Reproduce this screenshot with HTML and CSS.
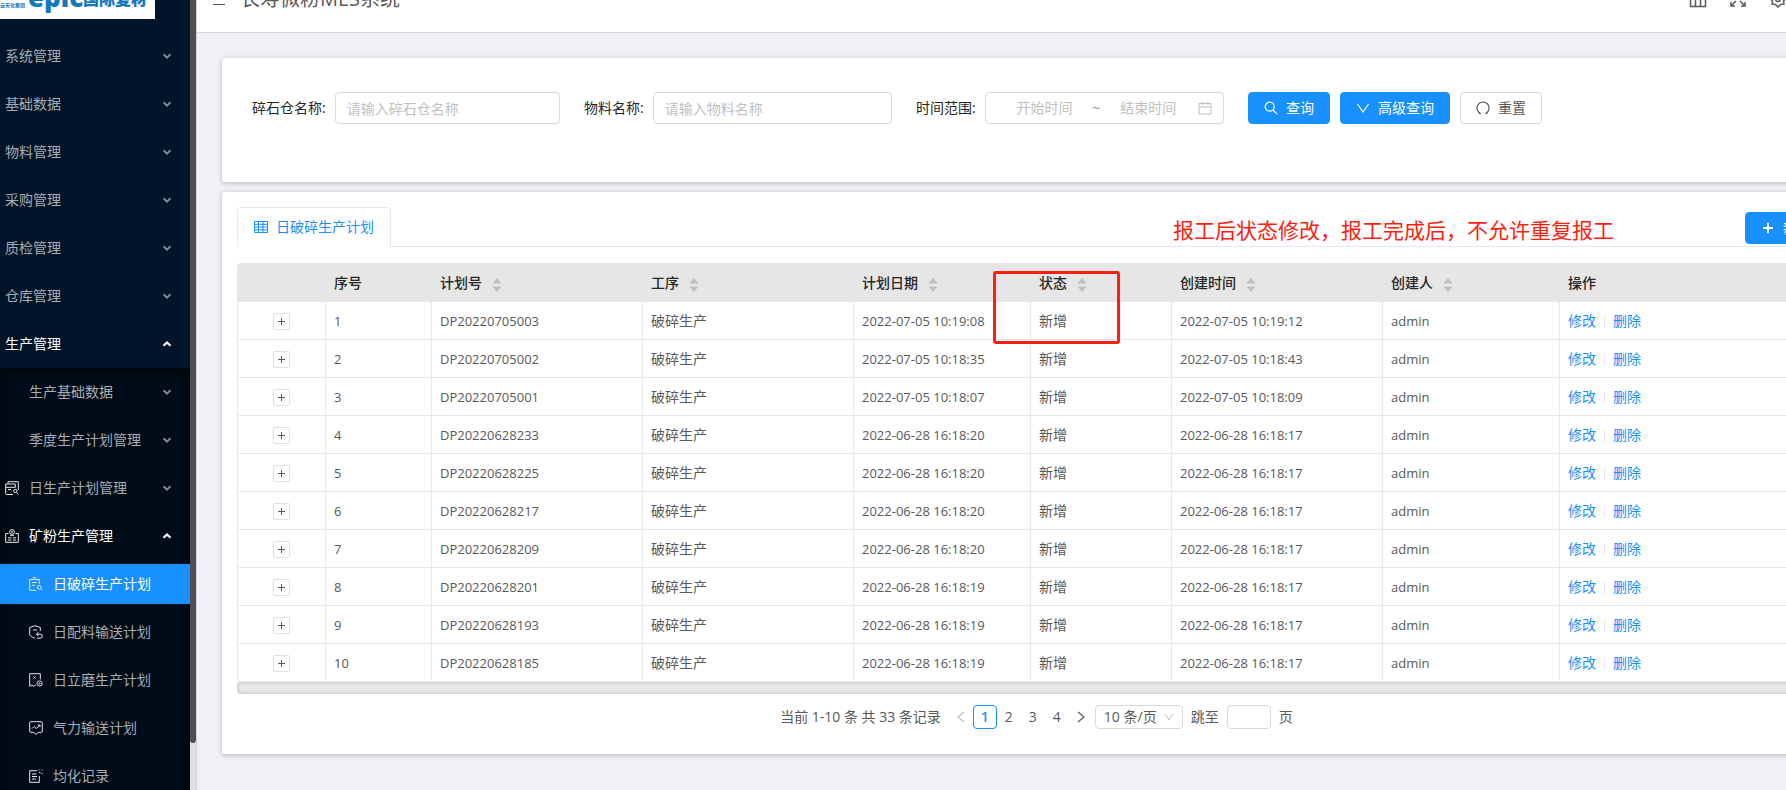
FILE: index.html
```html
<!DOCTYPE html>
<html lang="zh-CN">
<head>
<meta charset="utf-8">
<title>长寿微粉MES系统</title>
<link rel="stylesheet" href="styles.css">
</head>
<body>
<svg class="defs" aria-hidden="true">
  <symbol id="down" viewBox="0 0 10 10"><path d="M1.5 3.2 5 6.6 8.500 3.2" fill="none" stroke="currentColor" stroke-width="2"/></symbol>
  <symbol id="up" viewBox="0 0 10 10"><path d="M1.5 6.8 5 3.5 8.5 6.8" fill="none" stroke="currentColor" stroke-width="2.2"/></symbol>
  <symbol id="sort" viewBox="0 0 10 16"><path d="M5 1 9.5 6.5H.5zM5 15 9.5 9.5H.5z" fill="currentColor"/></symbol>
</svg>
<div class="app">
  <aside class="sider">
    <div class="logo"><span class="logo-group">云天化集团</span><span class="logo-en">epic</span><span class="logo-cn">国际复材</span></div>
    <nav class="menu">
      <a class="item" href="#">系统管理<svg class="arrow"><use href="#down"/></svg></a>
      <a class="item" href="#">基础数据<svg class="arrow"><use href="#down"/></svg></a>
      <a class="item" href="#">物料管理<svg class="arrow"><use href="#down"/></svg></a>
      <a class="item" href="#">采购管理<svg class="arrow"><use href="#down"/></svg></a>
      <a class="item" href="#">质检管理<svg class="arrow"><use href="#down"/></svg></a>
      <a class="item" href="#">仓库管理<svg class="arrow"><use href="#down"/></svg></a>
      <a class="item open" href="#">生产管理<svg class="arrow"><use href="#up"/></svg></a>
      <div class="submenu">
        <a class="item sub" href="#">生产基础数据<svg class="arrow"><use href="#down"/></svg></a>
        <a class="item sub" href="#">季度生产计划管理<svg class="arrow"><use href="#down"/></svg></a>
        <a class="item" href="#"><svg class="icon" viewBox="0 0 14 14"><path d="M3 3V.7h10.3V9M.7 3h9.6v3.5M.7 3v9.500a1 1 0 0 0 1 1H8M.7 6.300h9.600M3 8.500h3"/><circle cx="10.3" cy="10" r="1.7"/><path d="m11.5 11.5 1.800 1.800"/></svg>日生产计划管理<svg class="arrow"><use href="#down"/></svg></a>
        <a class="item open" href="#"><svg class="icon" viewBox="0 0 14 14"><path d="M3.500 4.500H.7v8.800h12.600V4.500h-2.800M3 8.800h3.500M8 8.800h3M3 11h3.500M8 11h3"/><circle cx="7" cy="3" r="2.400"/><circle cx="7" cy="3" r=".5"/><path d="M5 6.300h4"/></svg>矿粉生产管理<svg class="arrow"><use href="#up"/></svg></a>
        <a class="item deep active" href="#"><svg class="icon" viewBox="0 0 14 14"><path d="M3.500.7h4M.7 2.500v10.800h6.500M.7 2.500h9.600V7M3 5.500h5M3 8.300h3"/><circle cx="10.3" cy="10.3" r="1.800"/><path d="m11.600 11.600 1.700 1.700"/></svg>日破碎生产计划</a>
        <a class="item deep" href="#"><svg class="icon" viewBox="0 0 14 14"><path d="M11.300 6V2.500L6 .7.7 2.500v6.300c0 2 2.200 3.400 5 4.400M4 5h4M9.500 7.300 7.300 9.200l2.200 1.800M7.500 9.200h3.800a2 2 0 0 1 0 4H8"/></svg>日配料输送计划</a>
        <a class="item deep" href="#"><svg class="icon" viewBox="0 0 14 14"><path d="M11.300 6.500V.7H.7v12.600l2-1.200 2 1.200 2-1.200M4.500 3.500l2 2m0-2-2 2"/><circle cx="10.500" cy="10.500" r="2.600"/><circle cx="10.500" cy="10.500" r=".6"/></svg>日立磨生产计划</a>
        <a class="item deep" href="#"><svg class="icon" viewBox="0 0 14 14"><path d="M1.700.7h10.600a1 1 0 0 1 1 1v8.600a1 1 0 0 1-1 1H9.500L7 13.400l-2.500-2.100H1.700a1 1 0 0 1-1-1V1.700a1 1 0 0 1 1-1zM3 7.500l2-2 2.200 2L11 4.300M8.800 4H11v2"/></svg>气力输送计划</a>
        <a class="item deep" href="#"><svg class="icon" viewBox="0 0 14 14"><path d="M8 1.700H.7v11.600h9.600V7M3 5h4.500M3 7.500h5M3 10h4M9.500 1h1M12.500 1h1M10 3.500h1.500M12.500 4.500h1"/></svg>均化记录</a>
      </div>
    </nav>
  </aside>
  <div class="track"><div class="thumb"></div></div>
  <main class="main">
    <header class="header">
      <svg class="fold" viewBox="0 0 14 14"><path d="M1 1.500h12M1 7h12M1 12.500h12"/></svg>
      <h1 class="title">长寿微粉MES系统</h1>
      <div class="tools">
        <svg viewBox="0 0 18 18"><path d="M1.500 3.500h15v13h-15zM1.500 8h15M6.500 8v8.500M11.500 8v8.500"/></svg>
        <svg viewBox="0 0 18 18"><path d="M2 6V2h4M12 2h4v4M16 12v4h-4M6 16H2v-4M2 2l5 5M16 2l-5 5M16 16l-5-5M2 16l5-5"/></svg>
        <svg viewBox="0 0 18 18"><path d="m9 1 2 2.500 3-.5.500 3L17 8.500 14.500 11l.500 3-3.500.5L9 17l-2.500-2.500L3 14l.500-3L1 8.500 3.500 6 4 3l3 .5z"/><circle cx="9" cy="9" r="2.500"/></svg>
      </div>
    </header>
    <div class="content">
      <section class="card search">
        <form class="form">
          <div class="field"><label for="bin">碎石仓名称:</label><input id="bin" class="box" type="text" placeholder="请输入碎石仓名称"></div>
          <div class="field"><label for="mat">物料名称:</label><input id="mat" class="box" type="text" placeholder="请输入物料名称"></div>
          <div class="field"><label for="from">时间范围:</label>
            <div class="box range"><input id="from" type="text" placeholder="开始时间"><span>~</span><input type="text" aria-label="结束时间" placeholder="结束时间"><svg class="cal" viewBox="0 0 14 14"><path d="M1 2.500h12v10.500H1zM1 6h12M4 .5v3.500M10 .5v3.500"/></svg></div>
          </div>
          <div class="actions">
            <button class="btn primary" type="button"><svg viewBox="0 0 14 14"><circle cx="5.700" cy="5.700" r="4.500"/><path d="m9 9 4.300 4.300"/></svg>查询</button>
            <button class="btn primary" type="button"><svg viewBox="0 0 14 14"><path d="M1.500 3 7 11l5.500-8"/></svg>高级查询</button>
            <button class="btn" type="button"><svg viewBox="0 0 14 14"><path d="M4 12.200a6 6 0 1 1 6 0M2.800 12.500H5M9.500 12.500h2"/></svg>重置</button>
          </div>
        </form>
      </section>
      <section class="card list">
        <div class="tabs">
          <a class="tab" href="#"><svg viewBox="0 0 14 14"><path d="M.5 1.500h13v11H.5zM.5 4.300h13M.5 7h13M.5 9.800h13M4.500 1.500v11M9 1.500v11"/></svg>日破碎生产计划</a>
          <button class="btn primary add" type="button"><svg viewBox="0 0 14 14"><path d="M7 2v10M2 7h10"/></svg>新增</button>
          <p class="note">报工后状态修改，报工完成后，不允许重复报工</p>
        </div>
        <div class="tablewrap">
          <div class="mark"></div>
          <table class="table">
            <colgroup><col class="c-exp"><col class="c-no"><col class="c-wide"><col class="c-wide"><col class="c-mid"><col class="c-state"><col class="c-wide"><col class="c-mid"><col></colgroup>
            <thead><tr><th></th><th>序号</th><th>计划号<svg class="sort"><use href="#sort"/></svg></th><th>工序<svg class="sort"><use href="#sort"/></svg></th><th>计划日期<svg class="sort"><use href="#sort"/></svg></th><th>状态<svg class="sort"><use href="#sort"/></svg></th><th>创建时间<svg class="sort"><use href="#sort"/></svg></th><th>创建人<svg class="sort"><use href="#sort"/></svg></th><th>操作</th></tr></thead>
            <tbody>
              <tr><td><button class="exp" type="button" aria-label="展开"></button></td><td>1</td><td>DP20220705003</td><td class="zh">破碎生产</td><td>2022-07-05 10:19:08</td><td class="zh">新增</td><td>2022-07-05 10:19:12</td><td>admin</td><td class="zh"><a href="#">修改</a><i></i><a href="#">删除</a></td></tr>
              <tr><td><button class="exp" type="button" aria-label="展开"></button></td><td>2</td><td>DP20220705002</td><td class="zh">破碎生产</td><td>2022-07-05 10:18:35</td><td class="zh">新增</td><td>2022-07-05 10:18:43</td><td>admin</td><td class="zh"><a href="#">修改</a><i></i><a href="#">删除</a></td></tr>
              <tr><td><button class="exp" type="button" aria-label="展开"></button></td><td>3</td><td>DP20220705001</td><td class="zh">破碎生产</td><td>2022-07-05 10:18:07</td><td class="zh">新增</td><td>2022-07-05 10:18:09</td><td>admin</td><td class="zh"><a href="#">修改</a><i></i><a href="#">删除</a></td></tr>
              <tr><td><button class="exp" type="button" aria-label="展开"></button></td><td>4</td><td>DP20220628233</td><td class="zh">破碎生产</td><td>2022-06-28 16:18:20</td><td class="zh">新增</td><td>2022-06-28 16:18:17</td><td>admin</td><td class="zh"><a href="#">修改</a><i></i><a href="#">删除</a></td></tr>
              <tr><td><button class="exp" type="button" aria-label="展开"></button></td><td>5</td><td>DP20220628225</td><td class="zh">破碎生产</td><td>2022-06-28 16:18:20</td><td class="zh">新增</td><td>2022-06-28 16:18:17</td><td>admin</td><td class="zh"><a href="#">修改</a><i></i><a href="#">删除</a></td></tr>
              <tr><td><button class="exp" type="button" aria-label="展开"></button></td><td>6</td><td>DP20220628217</td><td class="zh">破碎生产</td><td>2022-06-28 16:18:20</td><td class="zh">新增</td><td>2022-06-28 16:18:17</td><td>admin</td><td class="zh"><a href="#">修改</a><i></i><a href="#">删除</a></td></tr>
              <tr><td><button class="exp" type="button" aria-label="展开"></button></td><td>7</td><td>DP20220628209</td><td class="zh">破碎生产</td><td>2022-06-28 16:18:20</td><td class="zh">新增</td><td>2022-06-28 16:18:17</td><td>admin</td><td class="zh"><a href="#">修改</a><i></i><a href="#">删除</a></td></tr>
              <tr><td><button class="exp" type="button" aria-label="展开"></button></td><td>8</td><td>DP20220628201</td><td class="zh">破碎生产</td><td>2022-06-28 16:18:19</td><td class="zh">新增</td><td>2022-06-28 16:18:17</td><td>admin</td><td class="zh"><a href="#">修改</a><i></i><a href="#">删除</a></td></tr>
              <tr><td><button class="exp" type="button" aria-label="展开"></button></td><td>9</td><td>DP20220628193</td><td class="zh">破碎生产</td><td>2022-06-28 16:18:19</td><td class="zh">新增</td><td>2022-06-28 16:18:17</td><td>admin</td><td class="zh"><a href="#">修改</a><i></i><a href="#">删除</a></td></tr>
              <tr><td><button class="exp" type="button" aria-label="展开"></button></td><td>10</td><td>DP20220628185</td><td class="zh">破碎生产</td><td>2022-06-28 16:18:19</td><td class="zh">新增</td><td>2022-06-28 16:18:17</td><td>admin</td><td class="zh"><a href="#">修改</a><i></i><a href="#">删除</a></td></tr>
            </tbody>
          </table>
          <div class="hbar"></div>
        </div>
        <div class="pager">
          <span class="total">当前 1-10 条 共 33 条记录</span>
          <button class="page prev" type="button" aria-label="上一页"><svg viewBox="0 0 8 12"><path d="M7 1 1 6l6 5"/></svg></button>
          <button class="page current" type="button">1</button>
          <button class="page" type="button">2</button>
          <button class="page" type="button">3</button>
          <button class="page" type="button">4</button>
          <button class="page" type="button" aria-label="下一页"><svg viewBox="0 0 8 12"><path d="m1 1 6 5-6 5"/></svg></button>
          <span class="size"><select aria-label="每页条数"><option>10 条/页</option></select><svg viewBox="0 0 10 10"><path d="M1 2l4 6 4-6"/></svg></span>
          <label class="jump" for="goto">跳至</label><input id="goto" class="goto" type="text"><span class="unit">页</span>
        </div>
      </section>
    </div>
  </main>
</div>
</body>
</html>
```
FILE: styles.css
```css
* { box-sizing: border-box; }
body {
  margin: 0;
  font: 14px/20px "Open Sans", "Noto Sans CJK SC", sans-serif;
  color: #595959;
  background: #eff1f5;
  overflow: hidden;
}
a { color: #1890ff; text-decoration: none; }
button, input, select { font: inherit; color: inherit; }
svg { fill: none; stroke: currentColor; }
.defs { display: none; }
.app { display: flex; height: 100vh; overflow: hidden; }

/* Side menu */
.sider { flex: 0 0 190px; background: #001529; overflow: hidden; }
.logo {
  display: flex;
  align-items: flex-end;
  gap: 3px;
  width: 155px;
  height: 52px;
  margin-top: -33px;
  padding-bottom: 10px;
  background: #fff;
  color: #1278be;
  font-weight: 700;
  white-space: nowrap;
}
.logo span { min-width: 0; }
.logo-group { flex: 0 0 25px; font-size: 5px; line-height: 8px; }
.logo-en { flex: 0 0 52px; font-size: 26px; font-weight: 800; line-height: 24px; }
.logo-cn { font-size: 16px; font-weight: 900; line-height: 20px; }
.menu { padding-top: 13px; }
.item {
  display: flex;
  align-items: center;
  height: 40px;
  margin: 4px 0 8px;
  padding: 0 18px 0 5px;
  color: #a6adb4;
}
.submenu {
  padding-top: 4px;
  margin-top: -4px;
  background: #000c17;
  box-shadow: inset 0 3px 8px #00050a;
}
.submenu .item { margin-top: 0; }
.sub { padding-left: 29px; }
.deep { padding-left: 29px; }
.item.open { color: #fff; }
.item.active { color: #fff; background: #1890ff; }
.icon { width: 14px; height: 14px; margin-right: 10px; color: #e6e8ea; }
.arrow { width: 10px; height: 10px; margin-left: auto; stroke: none; color: #7f8994; }
.open .arrow { color: #fff; }
.track { flex: 0 0 6px; background: #e0e0e0; }
.thumb { height: 94%; background: #4f4f4f; border-radius: 0 0 3px 3px; }

/* Page header */
.main { flex: 1; min-width: 0; overflow: hidden; border-left: 1px solid #d0d2d6; }
.header {
  display: flex;
  align-items: center;
  height: 65px;
  margin-top: -32px;
  padding: 0 0 2px 15px;
  background: #fff;
  border-bottom: 1px solid #d4d6d9;
}
.fold { width: 14px; height: 14px; margin-right: 14px; }
.title { margin: 0; font-size: 20px; line-height: 28px; font-weight: 400; }
.tools { display: flex; gap: 22px; margin: 0 -1px 0 auto; }
.tools svg { width: 18px; height: 18px; stroke-width: 1.5; }

/* Search card */
.content {
  display: flex;
  flex-direction: column;
  gap: 10px;
  margin-right: -56px;
  padding: 25px 0 0 25px;
}
.card { background: #fff; border-radius: 3px; box-shadow: 0 1px 5px #00000040; }
.search { height: 124px; padding: 34px 30px; }
.form { display: flex; align-items: center; gap: 24px; }
.field { flex: 0 1 308px; display: flex; align-items: center; min-width: 0; color: #262626; }
.field label { flex: none; margin-right: 9px; }
.box {
  flex: 1;
  min-width: 0;
  height: 32px;
  padding: 0 11px;
  border: 1px solid #d9d9d9;
  border-radius: 4px;
  background: #fff;
}
::placeholder { color: #bfbfbf; opacity: 1; }
.range { display: flex; align-items: center; }
.range input { flex: 1; min-width: 0; padding: 0; border: 0; text-align: center; }
.range span { color: #8c8c8c; }
.cal { width: 14px; height: 14px; margin-left: 2px; color: #bfbfbf; }
.actions { display: flex; gap: 10px; }
.btn {
  display: flex;
  align-items: center;
  gap: 8px;
  height: 32px;
  padding: 0 15px;
  border: 1px solid #d9d9d9;
  border-radius: 4px;
  background: #fff;
  white-space: nowrap;
}
.btn svg { width: 14px; height: 14px; stroke-width: 1.2; }
.primary { color: #fff; border-color: #1890ff; background: #1890ff; }

/* List card */
.list { height: 562px; padding: 15px; }
.tabs { position: relative; display: flex; align-items: flex-start; height: 40px; border-bottom: 1px solid #e8e8e8; }
.tab {
  display: flex;
  align-items: center;
  gap: 8px;
  height: 40px;
  padding: 0 16px;
  border: 1px solid #e8e8e8;
  border-bottom-color: #fff;
  border-radius: 4px 4px 0 0;
}
.tab svg { width: 14px; height: 14px; }
.add { margin: 5px 0 0 auto; }
.add svg { stroke-width: 2; }
.note { position: absolute; top: 8px; left: 936px; margin: 0; font-size: 21px; line-height: 30px; color: #ff1e10; white-space: nowrap; }
.tablewrap { position: relative; margin-top: 16px; }
.mark { position: absolute; left: 756px; top: 8px; width: 127px; height: 73px; border: 3px solid #ff1e10; border-radius: 3px; }
.table { width: 100%; table-layout: fixed; border-collapse: separate; border-spacing: 0; }
.c-exp { width: 89px; }
.c-no { width: 106px; }
.c-wide { width: 211px; }
.c-mid { width: 177px; }
.c-state { width: 141px; }
th {
  height: 39px;
  padding: 0 8px;
  background: #e6e6e6;
  color: #262626;
  font-weight: 500;
  text-align: left;
}
th:first-child { border-top-left-radius: 4px; }
.sort { width: 10px; height: 16px; margin-left: 10px; color: #bfbfbf; stroke: none; vertical-align: -5px; }
td {
  height: 38px;
  padding: 0 8px;
  border-right: 1px solid #e8e8e8;
  border-bottom: 1px solid #e8e8e8;
  font-size: 13px;
}
td:first-child { border-left: 1px solid #e8e8e8; text-align: center; }
td.zh { font-size: 14px; }
td i { display: inline-block; width: 1px; height: 13px; margin: 0 8px; background: #e8e8e8; vertical-align: -2px; }
.exp {
  display: block;
  width: 17px;
  height: 17px;
  margin: 2px auto 0;
  padding: 0;
  border: 1px solid #e0e0e0;
  border-radius: 2px;
  background:
    linear-gradient(#595959, #595959) center / 7px 1px no-repeat,
    linear-gradient(#595959, #595959) center / 1px 7px no-repeat,
    #fff;
}
.hbar { height: 12px; border-radius: 4px; background: #e8e8e8; box-shadow: inset 0 0 4px #00000033; }

/* Pagination */
.pager { display: flex; align-items: center; justify-content: center; margin-top: 11px; padding-left: 9px; }
.total { margin-right: 8px; }
.page {
  width: 24px;
  height: 24px;
  padding: 0;
  border: 1px solid transparent;
  border-radius: 4px;
  background: none;
}
.page svg { display: block; width: 8px; height: 12px; margin: auto; stroke-width: 1.2; }
.prev { color: #bfbfbf; }
.current { color: #1890ff; border-color: #1890ff; font-weight: 600; }
.size { position: relative; margin: 0 8px 0 2px; }
.size select {
  display: block;
  width: 88px;
  height: 24px;
  padding: 0 8px;
  border: 1px solid #d9d9d9;
  border-radius: 4px;
  background: #fff;
  appearance: none;
}
.size svg { position: absolute; right: 9px; top: 7px; width: 10px; height: 10px; color: #bfbfbf; }
.goto { width: 44px; height: 24px; margin: 0 8px; border: 1px solid #d9d9d9; border-radius: 4px; }
```
